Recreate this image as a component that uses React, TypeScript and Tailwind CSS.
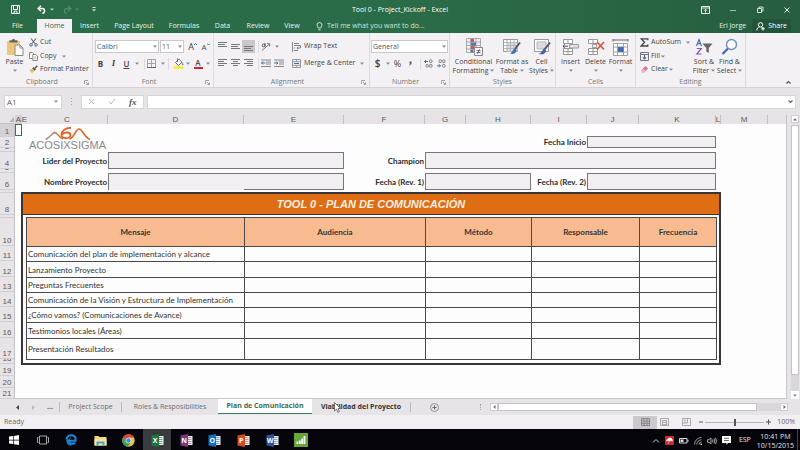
import React from 'react';

type Kids = { children?: React.ReactNode };

function Caret({ className = 'text-[#888]' }: { className?: string }) {
  return (
    <svg width="4" height="3" viewBox="0 0 4 3" className={`shrink-0 ${className}`} aria-hidden="true">
      <path d="M0 0.5h4L2 2.8z" fill="currentColor" />
    </svg>
  );
}

function Svg({ w, h, children }: { w: number; h: number } & Kids) {
  return (
    <svg width={w} height={h} viewBox={`0 0 ${w} ${h}`} fill="none" className="shrink-0" aria-hidden="true">
      {children}
    </svg>
  );
}

/* ---------- title bar and ribbon tabs ---------- */

function TitleBar() {
  return (
    <div className="grid h-[19px] grid-cols-3 items-center text-white">
      <div className="flex items-center pl-[11px]">
        <button aria-label="Save">
          <Svg w={9} h={9}>
            <path d="M0.5 0.5h8v8h-8z" stroke="#fff" />
            <path d="M2 4.5h5M3 8V6.2h3V8" stroke="#fff" />
            <path d="M2.5 1v3M6.5 1v3" stroke="#fff" />
          </Svg>
        </button>
        <button aria-label="Undo" className="ml-[17px]">
          <Svg w={9} h={9}>
            <path d="M4 0.8L1 3.5l3 2.7M1.2 3.5h4a2.4 2.4 0 0 1 0 4.8" stroke="#fff" strokeWidth="1.5" />
          </Svg>
        </button>
        <span className="ml-[4px]"><Caret className="text-[#b6cfc0]" /></span>
        <button aria-label="Redo" className="ml-[9px]">
          <Svg w={9} h={9}>
            <path d="M5 0.8l3 2.7-3 2.7M7.8 3.5h-4a2.4 2.4 0 0 0 0 4.8" stroke="#4f8868" strokeWidth="1.3" />
          </Svg>
        </button>
        <span className="ml-[3px]"><Caret className="text-[#4f8868]" /></span>
        <button aria-label="Customize Quick Access Toolbar" className="ml-[13px]">
          <Svg w={4} h={5}>
            <path d="M0.5 0.5h3" stroke="#cfe0d6" />
            <path d="M0 2.3h4L2 4.6z" fill="#cfe0d6" />
          </Svg>
        </button>
      </div>
      <h1 className="text-center text-[7px] leading-[19px] whitespace-nowrap">Tool 0 - Project_Kickoff - Excel</h1>
      <div className="flex items-center justify-end gap-[19px] pr-[9px]">
        <button aria-label="Ribbon Display Options">
          <Svg w={9} h={8}>
            <path d="M0.5 0.5h8v7h-8zM0.5 2h8" stroke="#e6efe9" />
            <path d="M4.5 6.5v-3M3 4.8l1.5-1.5L6 4.8" stroke="#e6efe9" strokeWidth="0.9" />
          </Svg>
        </button>
        <button aria-label="Minimize"><Svg w={8} h={8}><path d="M1 4.5h6" stroke="#a5c2b1" /></Svg></button>
        <button aria-label="Restore">
          <Svg w={8} h={8}>
            <path d="M1.5 2.5h4v4h-4zM3 2.2V1h4v4H6" stroke="#e6efe9" strokeWidth="0.9" />
          </Svg>
        </button>
        <button aria-label="Close"><Svg w={8} h={8}><path d="M1.5 1.5l5 5M6.5 1.5l-5 5" stroke="#e6efe9" /></Svg></button>
      </div>
    </div>
  );
}

const tabs: [string, string][] = [
  ['File', 'w-[35px]'],
  ['Home', 'w-[35px]'],
  ['Insert', 'w-[35px]'],
  ['Page Layout', 'w-[54px]'],
  ['Formulas', 'w-[46px]'],
  ['Data', 'w-[31px]'],
  ['Review', 'w-[40px]'],
  ['View', 'w-[28px]'],
];

function RibbonTabs() {
  return (
    <nav className="flex h-[14px] items-stretch text-[7px] leading-[14px] text-[#e8f1ec]">
      {tabs.map(([t, w]) => (
        <button key={t} className={`${w} shrink-0 text-center whitespace-nowrap ${t === 'File' ? 'mr-[2px]' : ''} ${t === 'Home' ? 'bg-[#f3f1f4] text-[#2f6b49]' : ''}`}>
          {t}
        </button>
      ))}
      <button className="ml-[10px] flex items-center gap-1 whitespace-nowrap text-[#d3e2d9]">
        <Svg w={7} h={9}>
          <path d="M2.3 6C2.3 4.8 1 4.3 1 2.9a2.5 2.3 0 0 1 5 0C6 4.3 4.7 4.8 4.7 6zM2.4 7.8h2.2" stroke="#e2ece6" strokeWidth="0.9" />
        </Svg>
        Tell me what you want to do...
      </button>
      <span className="ml-auto whitespace-nowrap">Eri Jorge</span>
      <button className="mr-[9px] ml-[6px] flex items-center gap-[3px] bg-[#22543a] px-1 text-white">
        <Svg w={9} h={9}>
          <circle cx="4.5" cy="2.8" r="2.2" stroke="#fff" />
          <path d="M0.8 8.5c0-2 1.2-3.2 2.7-3.6M5.5 4.9l1.3 1.3M7 5v3.6M5.2 6.8h3.6" stroke="#fff" />
        </Svg>
        Share
      </button>
    </nav>
  );
}

/* ---------- ribbon ---------- */

function Group({ label, width, launcher, children }: { label: string; width: string; launcher?: boolean } & Kids) {
  return (
    <section aria-label={label} className={`flex ${width} shrink-0 flex-col border-r border-[#dedce0]`}>
      <div className="h-[44px]">{children}</div>
      <div className="flex h-[10px] items-center">
        <span className="flex-1 text-center text-[7px] leading-[10px] text-[#777]">{label}</span>
        {launcher && (
          <button aria-label={`${label} settings`} className="mr-[3px]">
            <Svg w={5} h={5}>
              <path d="M0.5 4V0.5H4M2 2l2.5 2.5M4.5 2.5v2h-2" stroke="#8a8a8a" strokeWidth="0.8" />
            </Svg>
          </button>
        )}
      </div>
    </section>
  );
}

function Tool({ label, className = 'w-[13px]', children }: { label: string; className?: string } & Kids) {
  return (
    <button aria-label={label} className={`flex h-[13px] shrink-0 items-center justify-center ${className}`}>
      {children}
    </button>
  );
}

function More({ label, className = 'w-[7px]' }: { label: string; className?: string }) {
  return (
    <Tool label={`${label} options`} className={className}><Caret /></Tool>
  );
}

function BigButton({ lines, width, children }: { lines: string[]; width: string } & Kids) {
  const one = lines.length === 1;
  return (
    <button className={`flex ${width} shrink-0 flex-col items-center text-[7px] leading-[9px] whitespace-nowrap text-[#444]`}>
      <span className="flex h-[19px] items-center">{children}</span>
      <span className="mt-px">{lines[0]}</span>
      <span className="flex h-[9px] items-center gap-[2px]">
        {!one && lines[1]}
        <Caret />
      </span>
    </button>
  );
}

function Combo({ label, value, width }: { label: string; value: string; width: string }) {
  return (
    <span className={`relative ${width} h-[13px] shrink-0`}>
      <select aria-label={label} defaultValue={value} className="block h-[13px] w-full appearance-none border border-[#c9c7cb] bg-white pl-px text-[7px] leading-[11px] text-[#555]">
        <option>{value}</option>
      </select>
      <span className="pointer-events-none absolute top-[5px] right-[2px]"><Caret /></span>
    </span>
  );
}

const Sep = () => <span className="block h-[12px] w-px shrink-0 bg-[#dedce0]" />;

function Lines({ y, widths, align = 'left' }: { y: number; widths: number[]; align?: 'left' | 'center' | 'right' }) {
  return (
    <Svg w={9} h={9}>
      {widths.map((w, i) => {
        const x = align === 'left' ? 0 : align === 'right' ? 9 - w : (9 - w) / 2;
        return <path key={i} d={`M${x} ${y + i * 2 + 0.5}h${w}`} stroke="#777" />;
      })}
    </Svg>
  );
}

function Indent({ flip }: { flip?: boolean }) {
  return (
    <Svg w={10} h={9}>
      <path d="M0 1h10M5 3h5M5 5h5M0 7.5h10" stroke="#888" />
      <path d={flip ? 'M0 4h4M2.5 2.5L4 4 2.5 5.5' : 'M4.5 4h-4M2 2.5L0.5 4 2 5.5'} stroke="#3f6fa8" />
    </Svg>
  );
}

function Ribbon() {
  return (
    <div className="flex h-[55px] overflow-hidden border-b border-[#d5d3d7] bg-[#f3f1f4] text-[7px] text-[#444]">
      <Group label="Clipboard" width="w-[93px]" launcher>
        <div className="flex pl-px">
          <div className="pt-1">
            <BigButton lines={['Paste']} width="w-[27px]">
              <Svg w={18} h={18}>
                <path d="M1 3h13v14H1z" fill="#ecc77c" />
                <path d="M3.5 4.5V2.2h2.2a2 2 0 0 1 3.6 0h2.2v2.3z" fill="#666" />
                <path d="M9 7h5l3 3v7.5H9z" fill="#fff" stroke="#8a8a8a" />
                <path d="M14 7v3h3" stroke="#8a8a8a" />
              </Svg>
            </BigButton>
          </div>
          <div className="flex flex-col pt-[3px] pl-px">
            <button className="flex h-[13px] items-center gap-[2px]">
              <Svg w={9} h={9}>
                <path d="M2 0.5l4 5M7 0.5l-4 5" stroke="#666" strokeWidth="1.1" />
                <circle cx="2" cy="6.9" r="1.3" stroke="#4f6f9c" />
                <circle cx="7" cy="6.9" r="1.3" stroke="#4f6f9c" />
              </Svg>
              Cut
            </button>
            <div className="flex h-[14px] items-center">
              <button className="flex items-center gap-[2px]">
                <Svg w={9} h={9}>
                  <path d="M0.5 0.5h3l1.5 1.5v4.5H0.5z" fill="#fff" stroke="#8a8a8a" />
                  <path d="M3.8 2.5h3L8.5 4v4.5H3.8z" fill="#fff" stroke="#8a8a8a" />
                  <path d="M5 5h2.4M5 6.8h2.4" stroke="#7d94b5" strokeWidth="0.7" />
                </Svg>
                Copy
              </button>
              <span className="ml-1 flex"><More label="Copy" /></span>
            </div>
            <button className="flex h-[13px] items-center gap-[2px] whitespace-nowrap">
              <Svg w={9} h={9}>
                <path d="M0.5 5l3-1.5 2 2.2L3 8.5z" fill="#e8bd6a" />
                <path d="M3.2 3.3l2.4 2.5L7 4.4 4.6 2z" fill="#555" />
                <path d="M6 3.2l2.3-2.5" stroke="#555" strokeWidth="1.5" />
              </Svg>
              Format Painter
            </button>
          </div>
        </div>
      </Group>

      <Group label="Font" width="w-[121px]" launcher>
        <div className="flex flex-col pt-[5px]">
          <div className="flex h-[17px] items-center pl-[2px]">
            <Combo label="Font name" value="Calibri" width="w-[64px]" />
            <span className="ml-px flex"><Combo label="Font size" value="11" width="w-[24px]" /></span>
            <Tool label="Increase font size" className="ml-[2px] w-[13px] text-[9px] text-[#444]">
              A<Svg w={3} h={7}><path d="M0 2l1.5-1.5L3 2" stroke="#3f6fa8" /></Svg>
            </Tool>
            <Tool label="Decrease font size" className="w-[13px] text-[8px] text-[#444]">
              A<Svg w={3} h={7}><path d="M0 0.5L1.5 2 3 0.5" stroke="#3f6fa8" /></Svg>
            </Tool>
          </div>
          <div className="flex h-[17px] items-center pl-px">
            <Tool label="Bold"><b className="text-[8px]">B</b></Tool>
            <Tool label="Italic"><i className="font-['Liberation_Serif',serif] text-[9px] font-bold">I</i></Tool>
            <Tool label="Underline"><u className="text-[8px] font-semibold">U</u></Tool>
            <More label="Underline" />
            <span className="ml-1"><Sep /></span>
            <Tool label="Borders">
              <Svg w={9} h={9}>
                <path d="M0.5 0.5h8v8h-8zM4.5 0.5v8M0.5 4.5h8" stroke="#a5a5a5" />
                <path d="M0 8.5h9" stroke="#666" />
              </Svg>
            </Tool>
            <More label="Borders" className="w-[10px]" />
            <Sep />
            <Tool label="Fill color" className="ml-[2px] w-[14px]">
              <Svg w={11} h={11}>
                <path d="M2.5 4.5L6 1.2l3 3.1-3.6 3.2z" fill="#fff" stroke="#666" />
                <path d="M4.5 0.5v3.5" stroke="#666" />
                <path d="M9.6 4.2c1 1.6 1.2 3 .4 3.1-.8 0-1-1-.4-3.1z" fill="#3f6fa8" />
                <path d="M0.5 8.3h10v2.4h-10z" fill="#f2ef1a" />
              </Svg>
            </Tool>
            <More label="Fill color" className="w-[6px]" />
            <Tool label="Font color" className="w-[14px]">
              <span className="flex flex-col items-center">
                <span className="text-[8px] leading-[8px] font-semibold">A</span>
                <span className="h-[2px] w-[9px] bg-[#d3202a]" />
              </span>
            </Tool>
            <More label="Font color" className="w-[6px]" />
          </div>
        </div>
      </Group>

      <Group label="Alignment" width="w-[156px]" launcher>
        <div className="flex pt-[5px] pl-[2px]">
          <div className="flex w-[69px] flex-col">
            <div className="flex h-[17px] items-center">
              <Tool label="Top align"><Lines y={0} widths={[9, 7, 9]} /></Tool>
              <Tool label="Middle align"><Lines y={2} widths={[9, 7, 9]} /></Tool>
              <Tool label="Bottom align" className="w-[13px] bg-[#c9c7ca]"><Lines y={4} widths={[9, 7, 9]} /></Tool>
              <span className="ml-[3px]"><Sep /></span>
              <Tool label="Orientation" className="w-[14px]">
                <Svg w={10} h={9}>
                  <path d="M1 8.5L8.5 2M6 1.6l2.8.2-.3 2.6" stroke="#777" />
                  <circle cx="2.6" cy="3.4" r="1.4" stroke="#555" />
                  <path d="M4 1v3.5" stroke="#555" />
                </Svg>
              </Tool>
              <More label="Orientation" />
            </div>
            <div className="flex h-[17px] items-center">
              <Tool label="Align left"><Lines y={0} widths={[9, 6, 9, 6]} /></Tool>
              <Tool label="Center"><Lines y={0} widths={[9, 5, 9, 5]} align="center" /></Tool>
              <Tool label="Align right"><Lines y={0} widths={[9, 6, 9, 6]} align="right" /></Tool>
              <span className="ml-[3px]"><Sep /></span>
              <Tool label="Decrease indent"><Indent /></Tool>
              <Tool label="Increase indent"><Indent flip /></Tool>
            </div>
          </div>
          <div className="flex flex-col pl-[7px]">
            <button className="flex h-[17px] items-center gap-[3px] whitespace-nowrap">
              <Svg w={9} h={10}>
                <path d="M0.5 0v10" stroke="#888" />
                <path d="M2 1.5h5M2 3.5h6.5V6H5M2 6h1M2 8.5h4M6.3 4.7L5 6l1.3 1.3" stroke="#777" strokeWidth="0.9" />
              </Svg>
              Wrap Text
            </button>
            <div className="flex h-[17px] items-center">
              <button className="flex items-center gap-[3px] whitespace-nowrap">
                <Svg w={9} h={9}>
                  <path d="M0.5 0.5h8v8h-8zM0.5 2.7h8M0.5 6.3h8M4.5 0.5v2M4.5 6.5v2" stroke="#999" />
                  <path d="M2 4.5h5" stroke="#3f6fa8" />
                </Svg>
                Merge &amp; Center
              </button>
              <span className="ml-[3px] flex"><More label="Merge" /></span>
            </div>
          </div>
        </div>
      </Group>

      <Group label="Number" width="w-[80px]" launcher>
        <div className="flex flex-col pt-[5px] pl-px">
          <div className="flex h-[17px] items-center"><Combo label="Number format" value="General" width="w-[77px]" /></div>
          <div className="flex h-[17px] items-center">
            <Tool label="Accounting format"><span className="text-[10px] font-semibold">$</span></Tool>
            <More label="Accounting format" />
            <Tool label="Percent style"><span className="text-[9px]">%</span></Tool>
            <Tool label="Comma style" className="w-[12px]">
              <Svg w={3} h={5}><path d="M0.5 0.5h2v2L1 4.5H0.3L1 2.5H0.5z" fill="#555" /></Svg>
            </Tool>
            <span className="ml-1"><Sep /></span>
            <Tool label="Increase decimal" className="w-[14px]">
              <Svg w={9} h={9}>
                <path d="M4 2.5H0.5M2 1L0.5 2.5 2 4" stroke="#3f6fa8" />
                <rect x="5.5" y="0.8" width="2.5" height="2.8" rx="1" stroke="#666" strokeWidth="0.8" />
                <rect x="2" y="5.4" width="2.4" height="2.8" rx="1" stroke="#666" strokeWidth="0.8" />
                <rect x="5.6" y="5.4" width="2.4" height="2.8" rx="1" stroke="#666" strokeWidth="0.8" />
              </Svg>
            </Tool>
            <Tool label="Decrease decimal">
              <Svg w={9} h={9}>
                <path d="M0 6.8h3.5M2 5.3l1.5 1.5L2 8.3" stroke="#3f6fa8" />
                <rect x="2" y="0.8" width="2.4" height="2.8" rx="1" stroke="#666" strokeWidth="0.8" />
                <rect x="5.6" y="0.8" width="2.4" height="2.8" rx="1" stroke="#666" strokeWidth="0.8" />
                <rect x="5.6" y="5.4" width="2.4" height="2.8" rx="1" stroke="#666" strokeWidth="0.8" />
              </Svg>
            </Tool>
          </div>
        </div>
      </Group>

      <Group label="Styles" width="w-[106px]">
        <div className="flex pt-1 pl-px">
          <BigButton lines={['Conditional', 'Formatting']} width="w-[45px]">
            <Svg w={18} h={18}>
              <path d="M1.5 0.5h14v14h-14zM1.5 4h14M1.5 7.5h14M1.5 11h14M5.5 0.5v14M11 0.5v14" stroke="#a8a8a8" />
              <path d="M6 1h3v3H6zM6 8h4v3H6z" fill="#d9534a" />
              <path d="M6 4.5h5v3H6zM6 11.5h2.5v3H6z" fill="#4a78b5" />
              <path d="M9.5 9.5h8v8h-8z" fill="#fff" stroke="#888" />
              <path d="M11.5 12.6h4M11.5 14.6h4M14.5 11.3l-2 4.6" stroke="#555" strokeWidth="0.9" />
            </Svg>
          </BigButton>
          <BigButton lines={['Format as', 'Table']} width="w-[32px]">
            <Svg w={18} h={17}>
              <path d="M0.5 1.5h14v12h-14z" fill="#fff" stroke="#999" />
              <path d="M4 5h10.5v8.5H4z" fill="#d3dfee" />
              <path d="M0.5 4.5h14M0.5 7.5h14M0.5 10.5h14M4 1.5v12M7.5 1.5v12M11 1.5v12" stroke="#aaa" strokeWidth="0.8" />
              <path d="M17 4.5L12 11" stroke="#555" strokeWidth="2" />
              <path d="M12.5 10l-1.5 1c-1.5 1-1 3-4 4.5 3 1 6 0 6.7-3z" fill="#3f6fb5" />
            </Svg>
          </BigButton>
          <BigButton lines={['Cell', 'Styles']} width="w-[27px]">
            <Svg w={18} h={17}>
              <path d="M1.5 1.5h14v12h-14z" fill="#fff" stroke="#999" />
              <path d="M4 4h9v7H4z" fill="#dcdce0" stroke="#b5b5b5" />
              <path d="M17 4.5L12 11" stroke="#555" strokeWidth="2" />
              <path d="M12 10l-1.5 1c-1.5 1-1 3.5-5 5 4 1 7 0 7.5-3.5z" fill="#4a5fa8" />
            </Svg>
          </BigButton>
        </div>
      </Group>

      <Group label="Cells" width="w-[80px]">
        <div className="flex pt-1 pl-[2px]">
          <BigButton lines={['Insert']} width="w-[25px]">
            <Svg w={17} h={17}>
              <path d="M1.5 1.5h9v4h-9zM6 1.5v4M1.5 10.5h9v6h-9zM6 10.5v6M1.5 13.5h9" stroke="#999" fill="#fff" />
              <path d="M7.5 6.5h9V10h-9z" fill="#dde4ee" stroke="#999" />
              <path d="M6 8.2H1M3 6.3L1 8.2l2 2" stroke="#555" />
            </Svg>
          </BigButton>
          <BigButton lines={['Delete']} width="w-[25px]">
            <Svg w={18} h={17}>
              <path d="M1.5 1.5h9v4h-9zM6 1.5v4M1.5 10.5h9v6h-9zM6 10.5v6M1.5 13.5h9M5.5 6.5h4v3h-4z" stroke="#999" fill="#fff" />
              <path d="M10 4l7 7.5M17 4l-7 7.5" stroke="#d8543f" strokeWidth="1.7" />
            </Svg>
          </BigButton>
          <BigButton lines={['Format']} width="w-[25px]">
            <Svg w={17} h={18}>
              <path d="M1 1v2.5M16 1v2.5M1 2h15" stroke="#666" />
              <path d="M1.5 5.5h14v12h-14zM5.5 5.5v12M11.5 5.5v12M1.5 9h14M1.5 14h14" stroke="#a0a0a0" fill="#fff" />
              <path d="M6 9h5.5v5H6z" fill="#3f6db0" />
            </Svg>
          </BigButton>
        </div>
      </Group>

      <Group label="Editing" width="w-[110px]">
        <div className="flex pl-1">
          <div className="flex w-[51px] flex-col pt-[3px]">
            <div className="flex h-[13px] items-center">
              <button className="flex items-center gap-[2px]">
                <Svg w={9} h={9}><path d="M7.8 2.3V0.8H1.2L4.5 4.3 1.2 8h6.6V6.5" stroke="#444" strokeWidth="1.3" /></Svg>
                AutoSum
              </button>
              <span className="ml-[3px] flex"><More label="AutoSum" /></span>
            </div>
            <div className="flex h-[14px] items-center">
              <button className="flex items-center gap-[2px]">
                <Svg w={9} h={9}>
                  <path d="M0.5 0.5h8v8h-8zM0.5 2.5h8" stroke="#777" />
                  <path d="M4.5 3v4M2.8 5.3L4.5 7l1.7-1.7" stroke="#3f6fa8" strokeWidth="1.1" />
                </Svg>
                Fill
              </button>
              <More label="Fill" />
            </div>
            <div className="flex h-[13px] items-center">
              <button className="flex items-center gap-[2px]">
                <Svg w={9} h={9}>
                  <path d="M1 5.5L5.5 1 8 3.5l-4 4H2.5z" fill="#e0708f" />
                  <path d="M1 5.5l2-1.9 2.6 2.5L4 7.5H2.5z" fill="#f0b8c8" />
                </Svg>
                Clear
              </button>
              <More label="Clear" />
            </div>
          </div>
          <div className="flex pt-1">
            <BigButton lines={['Sort &', 'Filter']} width="w-[26px]">
              <Svg w={18} h={18}>
                <path d="M1.5 8L4 1.5 6.5 8M2.3 5.7h3.4" stroke="#4a6fb5" strokeWidth="1.2" />
                <path d="M1.8 10.5h4.5L1.8 16h4.7" stroke="#8a5aa8" strokeWidth="1.2" />
                <path d="M7.5 5.5h10L13.8 10v5l-2.5-1.5V10z" fill="#666" />
              </Svg>
            </BigButton>
            <BigButton lines={['Find &', 'Select']} width="w-[25px]">
              <Svg w={17} h={18}>
                <circle cx="10.5" cy="6.5" r="5" stroke="#6d8fbd" strokeWidth="1.4" fill="#fff" />
                <path d="M7 10.5L1.5 16" stroke="#3f6fb0" strokeWidth="2.3" />
              </Svg>
            </BigButton>
          </div>
        </div>
      </Group>

      <button aria-label="Collapse the Ribbon" className="mt-auto mr-[9px] mb-[3px] ml-auto">
        <Svg w={5} h={4}><path d="M0.5 3.5l2-2 2 2" stroke="#555" strokeWidth="1.2" /></Svg>
      </button>
    </div>
  );
}

function FormulaBar() {
  return (
    <div className="flex h-[27px] items-center px-1">
      <div className="flex h-[14px] w-[58px] shrink-0 items-center border border-[#d8d6da] bg-white pr-[3px]">
        <input aria-label="Name box" defaultValue="A1" className="w-full min-w-0 pl-[2px] text-[8px] leading-[12px] text-[#555] outline-none" />
        <Caret />
      </div>
      <Svg w={19} h={9}>
        <path d="M9.5 1v1M9.5 4v1M9.5 7v1" stroke="#aaa" />
      </Svg>
      <div className="flex h-[14px] w-[63px] shrink-0 items-center justify-around border border-[#d8d6da] bg-white">
        <button aria-label="Cancel"><Svg w={7} h={7}><path d="M1 1l5 5M6 1L1 6" stroke="#bbb" /></Svg></button>
        <button aria-label="Enter"><Svg w={8} h={7}><path d="M1 3.5L3 6l4-5" stroke="#bbb" /></Svg></button>
        <button aria-label="Insert function" className="font-['Liberation_Serif',serif] text-[9px] leading-[12px] font-bold text-[#555] italic">fx</button>
      </div>
      <div className="ml-[3px] flex h-[14px] flex-1 items-center border border-[#d8d6da] bg-white pr-[2px]">
        <input aria-label="Formula" className="h-full w-full min-w-0 px-1 text-[8px] outline-none" />
        <Svg w={5} h={4}><path d="M0.5 0.5l2 2 2-2" stroke="#666" strokeWidth="1.2" /></Svg>
      </div>
    </div>
  );
}

/* ---------- worksheet ---------- */

const sheetCols = 'grid grid-cols-[7px_5px_81px_136px_100px_81px_41px_65px_56px_52px_77px_5px_47px_1fr]';

const columnLetters = ['A', 'E', 'C', 'D', 'E', 'F', 'G', 'H', 'I', 'J', 'K', 'L', 'M', ''];

const rowHeaders: [string, string][] = [
  ['1', 'h-[13px] bg-[#d3d1d5]'],
  ['2', 'h-[11px]'],
  ['3', 'h-[4px]'],
  ['4', 'h-[17px]'],
  ['5', 'h-[4px]'],
  ['6', 'h-[17px]'],
  ['', 'h-[3px]'],
  ['8', 'h-[22px]'],
  ['', 'h-[3px]'],
  ['10', 'h-[28px]'],
  ['11', 'h-[15px]'],
  ['12', 'h-[16px]'],
  ['13', 'h-[15px]'],
  ['14', 'h-[15px]'],
  ['15', 'h-[15px]'],
  ['16', 'h-[16px]'],
  ['17', 'h-[21px]'],
  ['18', 'h-[5px]'],
  ['19', 'h-[12px]'],
  ['20', 'h-[12px]'],
  ['21', 'h-[11px]'],
];

const field = 'block w-full min-w-0 border border-[#77757a] bg-[#f1eff2] px-1 text-[8px] outline-none';
const fieldLabel = "flex items-center justify-end pr-px text-[8px] font-bold whitespace-nowrap text-[#2b2b2b] font-['Lato','Open_Sans',sans-serif]";

function ProjectForm() {
  return (
    <form className={`${sheetCols} grid-rows-[12px_12px_4px_17px_4px_17px_2px]`}>
      <div className="col-start-1 row-start-1 border border-[#2f7a52]" />
      <div className="col-start-3 row-span-3 row-start-1 flex flex-col items-center pt-[3px]">
        <Svg w={46} h={13}>
          <path d="M0.5 12.5C5 10.5 7 5.5 10 5.5" stroke="#9a8f8a" strokeWidth="1.4" />
          <path d="M9 5.500c3.500-1 4.500 5.500 9 6.500" stroke="#d9692c" strokeWidth="1.5" />
          <path d="M26 1c-5.500-.5-9.500 3-9.500 7 0 4 9 4.300 9 .4 0-3.500-6-4-9-.6" stroke="#e0672a" strokeWidth="1.8" />
          <path d="M24.500 12c5-1.500 6-10 9.500-10S39 10 45 12.500" stroke="#d9692c" strokeWidth="1.7" />
        </Svg>
        <span className="font-['Liberation_Sans',sans-serif] text-[11px] leading-[11px] text-[#8a888c]">ACOSIXSIGMA</span>
      </div>

      <label htmlFor="start" className={`${fieldLabel} col-start-9 row-start-2`}>Fecha Inicio</label>
      <input id="start" className={`${field} col-span-2 col-start-10 row-start-2`} />

      <label htmlFor="leader" className={`${fieldLabel} col-start-3 row-start-4`}>Lider del Proyecto</label>
      <input id="leader" className={`${field} col-span-2 col-start-4 row-start-4`} />
      <label htmlFor="champion" className={`${fieldLabel} col-start-6 row-start-4`}>Champion</label>
      <input id="champion" className={`${field} col-span-5 col-start-7 row-start-4`} />

      <label htmlFor="project" className={`${fieldLabel} col-start-3 row-start-6`}>Nombre Proyecto</label>
      <input id="project" className={`${field} col-span-2 col-start-4 row-start-6 border-b-0`} />
      <span className="z-10 col-start-5 row-start-6 h-px self-end bg-[#77757a]" />
      <label htmlFor="rev1" className={`${fieldLabel} col-start-6 row-start-6`}>Fecha (Rev. 1)</label>
      <input id="rev1" className={`${field} col-span-2 col-start-7 row-start-6`} />
      <label htmlFor="rev2" className={`${fieldLabel} col-start-9 row-start-6`}>Fecha (Rev. 2)</label>
      <input id="rev2" className={`${field} col-span-2 col-start-10 row-start-6`} />
    </form>
  );
}

const messages: [string, string][] = [
  ['Comunicación del plan de implementación y alcance', 'h-[15px]'],
  ['Lanzamiento Proyecto', 'h-[16px]'],
  ['Preguntas Frecuentes', 'h-[15px]'],
  ['Comunicación de la Visión y Estructura de Implementación', 'h-[15px]'],
  ['¿Cómo vamos? (Comunicaciones de Avance)', 'h-[15px]'],
  ['Testimonios locales (Áreas)', 'h-[16px]'],
  ['Presentación Resultados', 'h-[21px]'],
];

const cell = 'border border-[#4a484c] p-0';

function CommunicationPlan() {
  return (
    <div className="ml-[6px] w-[700px] border-2 border-[#37353a]">
      <h2 className="h-[21px] border-b border-[#37353a] bg-[#df6d14] text-center font-['Liberation_Sans',sans-serif] text-[11px] leading-[20px] font-bold text-[#fbeee2] italic">
        TOOL 0 - PLAN DE COMUNICACIÓN
      </h2>
      <div className="px-[3px] pt-[2px] pb-[3px]">
        <table className="w-full table-fixed border-collapse font-['Lato','Open_Sans',sans-serif] text-[8px] leading-[10px] text-[#333]">
          <colgroup>
            <col className="w-[218px]" />
            <col className="w-[181px]" />
            <col className="w-[106px]" />
            <col className="w-[108px]" />
            <col className="w-[77px]" />
          </colgroup>
          <thead>
            <tr className="h-[29px] bg-[#f8bb90]">
              {['Mensaje', 'Audiencia', 'Método', 'Responsable', 'Frecuencia'].map((h) => (
                <th key={h} scope="col" className={`${cell} font-bold`}>{h}</th>
              ))}
            </tr>
          </thead>
          <tbody>
            {messages.map(([m, h]) => (
              <tr key={m} className={h}>
                <td className={`${cell} pl-px whitespace-nowrap`}>{m}</td>
                <td className={cell} />
                <td className={cell} />
                <td className={cell} />
                <td className={cell} />
              </tr>
            ))}
          </tbody>
        </table>
      </div>
    </div>
  );
}

function Worksheet() {
  return (
    <div className="flex">
      <div className="min-w-0 flex-1">
        <div className="flex h-[9px] font-['Liberation_Sans',sans-serif] text-[8px] leading-[9px] text-[#5a585c]">
          <div className="flex w-[15px] shrink-0 items-end justify-end border-b border-[#c2c0c4] p-px">
            <Svg w={5} h={5}><path d="M5 0v5H0z" fill="#b5b3b7" /></Svg>
          </div>
          <div className={`${sheetCols} flex-1`}>
            {columnLetters.map((c, i) => (
              <span key={i} className={`flex justify-center border-b border-[#c2c0c4] ${i > 1 ? 'border-r' : ''} ${i === 0 ? 'bg-[#d3d1d5]' : ''}`}>
                {c}
              </span>
            ))}
          </div>
        </div>
        <div className="flex">
          <div className="w-[15px] shrink-0 border-r border-[#c2c0c4] font-['Liberation_Sans',sans-serif] text-[8px] text-[#5a585c]">
            {rowHeaders.map(([r, h], i) => (
              <div key={i} className={`flex ${h} items-end justify-center overflow-hidden border-b border-[#d0ced2] leading-[8px]`}>
                {r}
              </div>
            ))}
          </div>
          <div className="min-w-0 flex-1 border-r border-b border-[#c9c7cb] bg-[#fdfdfd]">
            <ProjectForm />
            <CommunicationPlan />
          </div>
        </div>
      </div>
      <div className="ml-[2px] flex w-[11px] shrink-0 flex-col items-center">
        <button aria-label="Scroll up" className="flex h-[8px] w-[8px] items-center justify-center border border-[#cfcdd1] bg-white">
          <Svg w={4} h={3}><path d="M0 2.5h4L2 0.3z" fill="#666" /></Svg>
        </button>
        <div className="mt-[2px] flex w-[8px] flex-1 flex-col bg-[#d9d7db]">
          <div className="h-[250px] border border-[#c4c2c6] bg-white" />
        </div>
        <button aria-label="Scroll down" className="flex h-[8px] w-[8px] items-center justify-center bg-white"><Caret /></button>
      </div>
    </div>
  );
}

/* ---------- sheet tabs and status bar ---------- */

function SheetTabs() {
  return (
    <div className="flex h-[16px] items-center text-[7px] whitespace-nowrap text-[#6d6b6f]">
      <div className="flex w-[60px] shrink-0 items-center border-r border-[#bdbbbf] pl-4">
        <button aria-label="Previous sheet"><Svg w={3} h={5}><path d="M3 0v5L0 2.5z" fill="#444" /></Svg></button>
        <button aria-label="Next sheet" className="ml-[13px]"><Svg w={3} h={5}><path d="M0 0v5l3-2.5z" fill="#bbb" /></Svg></button>
        <button aria-label="More sheets" className="ml-3 font-bold text-[#444]">...</button>
      </div>
      <button className="w-[62px] shrink-0 border-r border-[#bdbbbf] text-center">Project Scope</button>
      <button className="w-[96px] shrink-0 text-center">Roles &amp; Resposibilities</button>
      <button className="h-[15px] w-[94px] shrink-0 self-start border-b border-[#3f7d5c] bg-white text-center leading-[14px] font-bold text-[#3b6e54]">Plan de Comunicación</button>
      <button className="relative w-[99px] shrink-0 border-r border-[#bdbbbf] text-center font-bold text-[#333]">
        Viabilidad del Proyecto
        <span className="absolute top-0 left-[22px]">
          <Svg w={8} h={11}>
            <path d="M0.5 0.5V9l2-1.8 1.4 3 1.5-.7L4 6.600h2.700z" fill="#fff" stroke="#555" strokeWidth="0.8" />
          </Svg>
        </span>
      </button>
      <button aria-label="New sheet" className="ml-[19px]">
        <Svg w={9} h={9}>
          <circle cx="4.5" cy="4.5" r="4" stroke="#8a888c" strokeWidth="0.9" />
          <path d="M2.5 4.5h4M4.5 2.5v4" stroke="#6a686c" />
        </Svg>
      </button>
      <span className="ml-[41px] h-[6px] border-l border-dotted border-[#a5a3a7]" />
      <div className="mr-3 ml-[9px] flex h-[8px] flex-1 bg-[#d9d7db]">
        <button aria-label="Scroll left" className="flex w-[8px] items-center justify-center border border-[#cfcdd1] bg-white">
          <Svg w={3} h={4}><path d="M2.5 0v4L0.3 2z" fill="#666" /></Svg>
        </button>
        <div className="w-[259px] border border-[#c4c2c6] bg-white" />
        <button aria-label="Scroll right" className="ml-auto flex w-[8px] items-center justify-center border border-[#cfcdd1] bg-white">
          <Svg w={3} h={4}><path d="M0.5 0v4l2.2-2z" fill="#666" /></Svg>
        </button>
      </div>
    </div>
  );
}

function StatusBar() {
  return (
    <div className="flex h-[14px] items-center bg-[#f1eff2] pr-[5px] pl-1 text-[7px] leading-[14px] text-[#666]">
      <span>Ready</span>
      <div className="ml-auto flex h-full items-center">
        <button aria-label="Normal view" className="flex h-[13px] w-[24px] items-center justify-center bg-[#cbc9cd]">
          <Svg w={9} h={8}><path d="M0.5 0.5h8v7h-8zM0.5 3h8M0.5 5.3h8M3 0.5v7M6 0.5v7" stroke="#777" strokeWidth="0.8" /></Svg>
        </button>
        <button aria-label="Page layout view" className="ml-[3px] w-[9px]">
          <Svg w={9} h={8}><path d="M0.5 0.5h8v7h-8zM2.5 2v5M6.5 2v5M3 2.5h3M3 4.5h3M3 6.5h3" stroke="#999" strokeWidth="0.8" /></Svg>
        </button>
        <button aria-label="Page break preview" className="ml-[13px] w-[9px]">
          <Svg w={9} h={8}><path d="M0.5 0.5h8v7h-8zM0.5 5h5V0.5M3 0.5V5" stroke="#999" strokeWidth="0.8" /></Svg>
        </button>
        <button aria-label="Zoom out" className="ml-2"><Svg w={4} h={6}><path d="M0 3h4" stroke="#555" /></Svg></button>
        <input
          type="range"
          aria-label="Zoom"
          defaultValue={50}
          className="mx-[2px] h-px w-[59px] appearance-none bg-[#b5b3b7] [&::-webkit-slider-thumb]:h-[7px] [&::-webkit-slider-thumb]:w-[2px] [&::-webkit-slider-thumb]:appearance-none [&::-webkit-slider-thumb]:bg-[#555]"
        />
        <button aria-label="Zoom in"><Svg w={5} h={6}><path d="M0 3h5M2.5 0.5v5" stroke="#555" /></Svg></button>
        <span className="ml-[6px]">100%</span>
      </div>
    </div>
  );
}

/* ---------- taskbar ---------- */

function OfficeIcon({ letter, color, pale }: { letter: string; color: string; pale: string }) {
  return (
    <svg width="13" height="13" viewBox="0 0 13 13" aria-hidden="true">
      <path d="M7 2h5.5v9H7z" fill="#f4f4f4" />
      <path d="M8 3.5h3.5M8 5.5h3.5M8 7.5h3.5M8 9.5h3.5" stroke={pale} />
      <path d="M0.5 1.5L8 0v13L0.5 11.5z" fill={color} />
      <text x="4.2" y="9" textAnchor="middle" fontSize="7" fontWeight="700" fill="#fff" fontFamily="Open Sans, sans-serif">{letter}</text>
    </svg>
  );
}

const apps: { name: string; icon: React.ReactNode; state?: 'open' | 'active' }[] = [
  { name: 'Start', icon: <Svg w={10} h={10}><path d="M0 1.5L4.3 1v3.7H0zM5 0.9L10 0v4.7H5zM0 5.4h4.3V9L0 8.5zM5 5.4h5V10l-5-.8z" fill="#fff" /></Svg> },
  { name: 'Task View', icon: <Svg w={12} h={10}><path d="M2.5 1h7v8h-7zM1.5 2.5h-1v5h1M10.5 2.5h1v5h-1" stroke="#bbb" strokeWidth="0.9" /></Svg> },
  {
    name: 'Edge',
    icon: (
      <Svg w={12} h={12}>
        <path d="M1.5 5.5C2 2.8 4 1.3 6.3 1.3c2.7 0 4.3 1.9 4.3 4.5v1H4c0 2 1.2 3 3.2 3 1.2 0 2-.3 3-.8" stroke="#1f86dc" strokeWidth="2" />
        <path d="M4 6C4.5 4.5 5.2 4 6.2 4" stroke="#1f86dc" />
        <path d="M2.5 5c-1.500 3 .5 6 4 6" stroke="#1f86dc" strokeWidth="1.5" />
      </Svg>
    ),
  },
  {
    name: 'File Explorer',
    icon: (
      <Svg w={13} h={11}>
        <path d="M0.5 1h4l1 1h7v8.5h-12z" fill="#f3d678" />
        <path d="M0.5 4h12v6.5h-12z" fill="#f8e6a0" />
        <path d="M2.5 6.5h8v4h-2v-2h-4v2h-2z" fill="#4a9fd8" />
      </Svg>
    ),
  },
  {
    name: 'Chrome',
    state: 'open',
    icon: (
      <Svg w={13} h={13}>
        <circle cx="6.5" cy="6.5" r="6.2" fill="#e8c53a" />
        <path d="M6.5 6.5L1.1 3.4a6.2 6.2 0 0 1 10.900.2H6.5z" fill="#d9453a" />
        <path d="M6.5 6.5L1.1 3.4a6.2 6.2 0 0 0 4.7 9.3L9 8z" fill="#3f9f56" />
        <circle cx="6.5" cy="6.5" r="2.8" fill="#fff" />
        <circle cx="6.5" cy="6.5" r="2.2" fill="#4a83dc" />
      </Svg>
    ),
  },
  { name: 'Excel', state: 'active', icon: <OfficeIcon letter="X" color="#1f7346" pale="#5fa580" /> },
  { name: 'OneNote', icon: <OfficeIcon letter="N" color="#80397b" pale="#b889b4" /> },
  { name: 'Outlook', icon: <OfficeIcon letter="O" color="#0f72c4" pale="#5fa5dc" /> },
  { name: 'PowerPoint', icon: <OfficeIcon letter="P" color="#d24a28" pale="#e89078" /> },
  { name: 'Word', icon: <OfficeIcon letter="W" color="#2b5699" pale="#7f9fd0" /> },
  {
    name: 'Minitab',
    state: 'open',
    icon: (
      <Svg w={14} h={14}>
        <path d="M0 0h14v14H0z" fill="#67a53f" />
        <path d="M2.5 8.5h1.8V11H2.5zM5 7.5h1.8V11H5zM7.3 5.5h1.8V11H7.3zM9.6 3h1.8v8H9.6z" fill="#fff" />
      </Svg>
    ),
  },
];

function Taskbar() {
  return (
    <footer className="flex h-[23px] items-stretch bg-[#04040a] text-[7px] text-[#e4e4e6]">
      <div className="flex w-[315px] shrink-0 justify-between">
        {apps.map((a) => (
          <button
            key={a.name}
            aria-label={a.name}
            className={`flex w-[28px] flex-col items-center justify-between ${a.state === 'active' ? 'bg-[#3a3b3e]' : ''}`}
          >
            <span className="flex flex-1 items-center">{a.icon}</span>
            <span className={`h-px ${a.state === 'active' ? 'w-[28px]' : 'w-[23px]'} ${a.state ? 'bg-[#8fb3dc]' : ''}`} />
          </button>
        ))}
      </div>
      <div className="ml-auto flex items-center gap-[5px]">
        <button aria-label="Show hidden icons"><Svg w={8} h={6}><path d="M1 4.5l3-3 3 3" stroke="#ccc" /></Svg></button>
        <Svg w={9} h={9}>
          <path d="M0 0h9v9H0z" fill="#d5242e" />
          <path d="M1.5 5C2 3 3.5 1.8 6 2c1 .8 1.5 1.8 1.4 3.2L5.8 4.6 4.5 5 3.2 4.4zM4.5 4.5L3.3 7.5" fill="#fff" stroke="#fff" strokeWidth="0.6" />
        </Svg>
        <Svg w={10} h={7}>
          <path d="M0.5 1.5H8V6H0.5z" stroke="#ddd" />
          <path d="M1.5 2.5h3V5h-3zM8.5 2.8h1v2h-1z" fill="#ddd" />
        </Svg>
        <Svg w={8} h={8}>
          <path d="M0.5 7.5a7 7 0 0 1 7-7M2.8 7.5a4.7 4.7 0 0 1 4.7-4.7M5 7.5A2.5 2.5 0 0 1 7.5 5" stroke="#999" />
          <path d="M6.5 6.5H8V8H6.5z" fill="#ccc" />
        </Svg>
        <Svg w={10} h={8}>
          <path d="M0.5 2.7H2L4 1v6L2 5.3H0.5z" stroke="#ccc" strokeWidth="0.8" />
          <path d="M5.5 2.5q1 1.5 0 3M7 1.5q1.7 2.5 0 5M8.5 0.8q2 3.2 0 6.4" stroke="#ccc" strokeWidth="0.8" />
        </Svg>
        <Svg w={9} h={9}>
          <path d="M0 0h9v7H6L4.5 9V7H0z" fill="#fff" />
          <path d="M2 2.3h5M2 4.5h5" stroke="#444" strokeWidth="0.8" />
        </Svg>
        <span className="ml-[3px]">ESP</span>
      </div>
      <time className="ml-[6px] flex flex-col justify-center text-center leading-[9px] whitespace-nowrap">
        <span>10:41 PM</span>
        <span>10/15/2015</span>
      </time>
      <button aria-label="Show desktop" className="ml-[3px] w-[3px] border-l border-[#444]" />
    </footer>
  );
}

export default function App() {
  return (
    <div className="w-full overflow-hidden bg-[#e6e4e7] font-['Open_Sans','Noto_Sans',sans-serif]">
      <header className="bg-linear-to-r from-[#2b6c48] via-[#2b6c48] to-[#265e3f]">
        <TitleBar />
        <RibbonTabs />
      </header>
      <Ribbon />
      <FormulaBar />
      <main>
        <Worksheet />
        <SheetTabs />
      </main>
      <StatusBar />
      <Taskbar />
    </div>
  );
}
